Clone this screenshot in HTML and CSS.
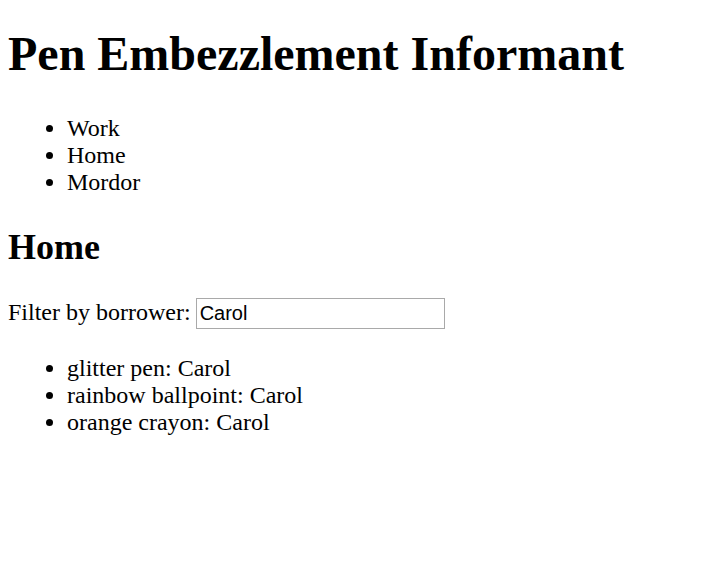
FILE: index.html
```html
<!DOCTYPE html>
<html>
<head>
<meta charset="utf-8">
<title>Pen Embezzlement Informant</title>
<link rel="stylesheet" href="styles.css">
</head>
<body>
<h1 class="title">Pen Embezzlement Informant</h1>
<ul class="list">
  <li>Work</li>
  <li>Home</li>
  <li>Mordor</li>
</ul>
<h2 class="section">Home</h2>
<p class="filter">Filter by borrower: <input class="filter-input" type="text" value="Carol"></p>
<ul class="list">
  <li>glitter pen: Carol</li>
  <li>rainbow ballpoint: Carol</li>
  <li>orange crayon: Carol</li>
</ul>
</body>
</html>
```
FILE: styles.css
```css
html { background: #fff; }
body {
  margin: 8px;
  font-family: "Liberation Serif", "Times New Roman", serif;
  font-size: 24px;
  color: #000;
}
.title {
  font-size: 48px;
  font-weight: bold;
  margin: 18px 0 34px;
}
.list {
  margin: 0 0 24px;
  padding-left: 59px;
}
.section {
  font-size: 36px;
  font-weight: bold;
  margin: 30px 0;
}
.filter {
  margin: 30px 0 26px;
}
.filter-input {
  box-sizing: border-box;
  width: 249px;
  height: 31px;
  margin-left: -1px;
  border: 1.5px solid #a9a9a9;
  padding: 0 3px;
  font-family: "Liberation Sans", Arial, sans-serif;
  font-size: 20px;
  color: #000;
  vertical-align: baseline;
}
```
